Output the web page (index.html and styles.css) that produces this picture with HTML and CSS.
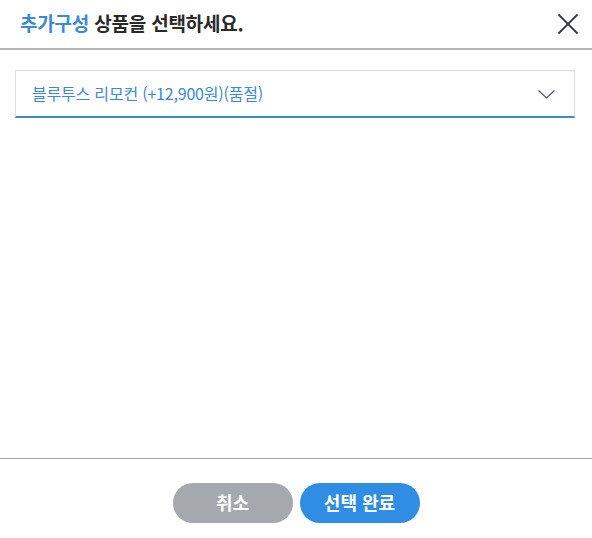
FILE: index.html
```html
<!DOCTYPE html>
<html lang="ko">
<head>
<meta charset="utf-8">
<link rel="stylesheet" href="styles.css">
</head>
<body>
<div class="modal">
  <header class="modal-header">
    <h1 class="title"><span class="accent">추가구성</span> 상품을 선택하세요.</h1>
    <button class="close" aria-label="닫기">
      <svg width="22" height="22" viewBox="0 0 22 22"><path d="M1.5 1.5L20.5 20.5M20.5 1.5L1.5 20.5" stroke="#2b3a4a" stroke-width="1.8" fill="none"/></svg>
    </button>
  </header>
  <main class="modal-body">
    <div class="select">
      <span class="select-text">블루투스 리모컨 (+12,900원)(품절)</span>
      <svg class="chevron" width="17" height="9" viewBox="0 0 17 9"><path d="M0.5 0.5L8.5 8L16.5 0.5" stroke="#4a5563" stroke-width="1.2" fill="none"/></svg>
    </div>
  </main>
  <footer class="modal-footer">
    <button class="btn btn-cancel">취소</button>
    <button class="btn btn-ok">선택 완료</button>
  </footer>
</div>
</body>
</html>
```
FILE: styles.css
```css
* { box-sizing: border-box; }
html, body { margin: 0; padding: 0; background: #fff; }
body { font-family: "Noto Sans CJK KR", "Noto Sans", sans-serif; color: #222; }
.modal { width: 592px; height: 538px; display: flex; flex-direction: column; }
.modal-header {
  height: 50px;
  display: flex; align-items: center; justify-content: space-between;
  padding: 0 13px 0 20px;
  border-bottom: 2px solid #b4b4b4;
}
.title { margin: 0; font-size: 19px; font-weight: 700; color: #2a2a2a; letter-spacing: -0.2px; padding-bottom: 4px; }
.accent { color: #3a8ad8; }
.close { background: none; border: 0; padding: 0; width: 22px; height: 22px; display: flex; }
.modal-body { flex: 1; padding: 20px 17px 0 15px; }
.select {
  height: 48px;
  border: 1px solid #dcdcdc;
  border-bottom: 2px solid #3a8ad8;
  display: flex; align-items: center; justify-content: space-between;
  padding: 0 19px 0 16px;
}
.select-text { font-size: 16px; font-weight: 400; color: #3a8ad8; letter-spacing: -0.2px; padding-bottom: 2px; }
.chevron { margin-top: 2px; }
.modal-footer {
  height: 80px;
  border-top: 1px solid #a8a8a8;
  display: flex; justify-content: center; align-items: flex-start;
  gap: 7px;
  padding-top: 24px;
}
.btn {
  width: 120px; height: 40px; border: 0; border-radius: 20px;
  font-family: "Noto Sans CJK KR", sans-serif; font-size: 18px; font-weight: 700; color: #fff;
  padding: 0 0 2px;
}
.btn-cancel { background: #a5a9ae; }
.btn-ok { background: #2f8de4; }
```
